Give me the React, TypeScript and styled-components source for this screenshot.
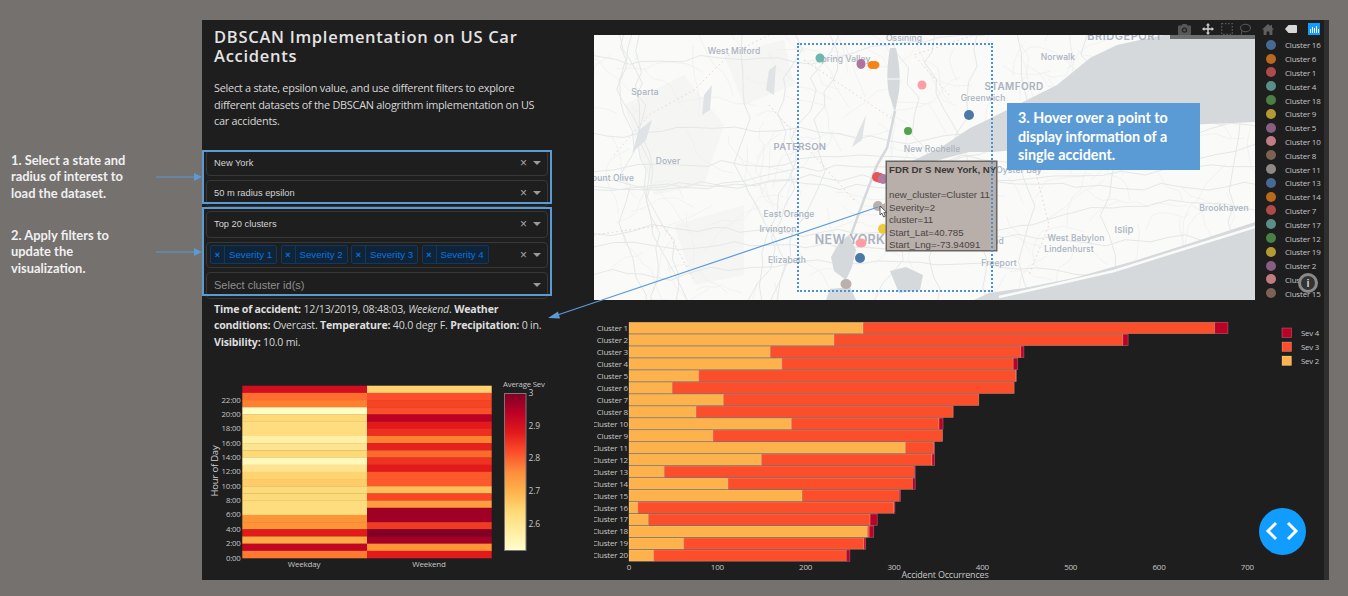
import React from 'react';
import styled, { createGlobalStyle } from 'styled-components';

const Global = createGlobalStyle`
  html, body { margin: 0; padding: 0; background: #75716f; }
  * { box-sizing: border-box; }
`;

const BLUE = '#5b9bd5';
const OPEN = '"Open Sans", "Noto Sans", sans-serif';
const ARIAL = '"Liberation Sans", Arial, sans-serif';

const Page = styled.div`
  position: relative;
  width: 1348px;
  height: 596px;
  overflow: hidden;
  display: flex;
  padding: 20px 0 0 11px;
  background: #75716f;
`;

const Notes = styled.div`
  width: 191px;
  padding-top: 132px;
  display: flex;
  flex-direction: column;
  gap: 26px;
`;
const NoteRow = styled.div`
  display: flex;
  align-items: center;
  justify-content: space-between;
  height: 49px;
`;
const NoteText = styled.div`
  width: 125px;
  font: 700 12.9px/16.5px Lato, sans-serif;
  color: #f0f0f0;
`;

const Panel = styled.div`
  width: 1127px;
  height: 560px;
  display: flex;
  background: #1e1e1e;
`;
const LeftCol = styled.div`
  width: 392px;
  flex: none;
  display: flex;
  flex-direction: column;
  padding-top: 7px;
`;
const Title = styled.h1`
  margin: 0 0 0 12px;
  width: 330px;
  font: 600 16.5px/19px ${OPEN};
  letter-spacing: 0.72px;
  color: #e4e4e4;
`;
const Intro = styled.p`
  margin: 15px 0 20px 12px;
  width: 325px;
  font: 400 10.9px/16.5px ${OPEN};
  letter-spacing: -0.26px;
  color: #d8d8d8;
`;
const Group = styled.div<{ $top: number; $bottom: number }>`
  position: relative;
  margin: 0 0 0 4px;
  width: 342px;
  display: flex;
  flex-direction: column;
  gap: 4px;
  &::after {
    content: '';
    position: absolute;
    left: -4px;
    right: -4px;
    top: ${p => p.$top}px;
    bottom: ${p => p.$bottom}px;
    border: 2px solid ${BLUE};
    pointer-events: none;
  }
  & + & { margin-top: 4.5px; }
`;
const Drop = styled.div`
  height: 26.5px;
  display: flex;
  align-items: center;
  padding: 0 6px 0 7px;
  border: 1px solid #383838;
  border-radius: 4px;
  background: #1e1e1e;
`;
const DropValue = styled.div`
  flex: 1;
  font: 400 9.3px ${ARIAL};
  color: #d4d4d4;
`;
const DropPlaceholder = styled.div`
  flex: 1;
  font: 400 11px ${ARIAL};
  color: #8f8f8f;
`;
const Clear = styled.span`
  font: 400 12px ${ARIAL};
  color: #a8a8a8;
  margin-right: 6px;
`;
const Caret = styled.span`
  width: 0;
  height: 0;
  border-left: 4px solid transparent;
  border-right: 4px solid transparent;
  border-top: 4px solid #9a9a9a;
`;
const Tags = styled.div`
  flex: 1;
  margin-left: -4px;
  display: flex;
  gap: 3.5px;
`;
const Tag = styled.div`
  width: 67px;
  height: 19px;
  display: flex;
  align-items: stretch;
  background: #0f2438;
  border: 1px solid #12395c;
  border-radius: 2px;
  color: #0a74e0;
`;
const TagX = styled.span`
  width: 14px;
  border-right: 1px solid #12395c;
  display: flex;
  align-items: center;
  justify-content: center;
  font: 700 9px ${ARIAL};
`;
const TagLabel = styled.span`
  flex: 1;
  padding-left: 4px;
  font: 400 9.7px/17px ${ARIAL};
  white-space: nowrap;
`;
const Details = styled.p`
  margin: 2.5px 0 0 12px;
  width: 330px;
  font: 400 10.6px/16.3px ${OPEN};
  letter-spacing: -0.2px;
  color: #d6d6d6;
  b { font-weight: 700; color: #dedede; }
`;
const HeatSvg = styled.svg`
  display: block;
  margin-top: 28.5px;
  flex: none;
`;
const AxisText = styled.text<{ $size?: number; $fill?: string }>`
  font-family: ${OPEN};
  font-size: ${p => p.$size ?? 8}px;
  letter-spacing: -0.2px;
  fill: ${p => p.$fill ?? '#c6c6c6'};
`;

const RightCol = styled.div`
  position: relative;
  width: 730px;
  flex: none;
  padding-top: 15px;
`;
const MapRow = styled.div`
  display: flex;
  height: 265px;
`;
const MapBox = styled.div`
  position: relative;
  width: 661px;
  height: 265px;
  flex: none;
  overflow: hidden;
  background: #fafaf9;
`;
const MapSvg = styled.svg`
  display: block;
`;
const MapLabel = styled.text<{ $size?: number; $weight?: number; $ls?: number }>`
  font-family: Inter, ${OPEN};
  font-size: ${p => p.$size ?? 8.5}px;
  font-weight: ${p => p.$weight ?? 500};
  letter-spacing: ${p => p.$ls ?? 0.1}px;
  fill: #a9b2be;
  text-anchor: middle;
`;
const Selection = styled.div`
  position: absolute;
  left: 203px;
  top: 8px;
  width: 196px;
  height: 249px;
  border: 2px dotted #4a92d8;
  z-index: 3;
`;
const Callout = styled.div`
  position: absolute;
  left: 413px;
  top: 68px;
  width: 193px;
  height: 67px;
  padding: 6px 20px 0 11px;
  background: ${BLUE};
  font: 700 14.3px/18.5px Lato, sans-serif;
  color: #fff;
  z-index: 4;
`;
const HoverBox = styled.div`
  position: absolute;
  left: 292px;
  top: 126px;
  width: 111px;
  height: 90px;
  padding: 2px 0 0 2px;
  background: #b8aeaa;
  border: 1px solid #6a6664;
  box-shadow: 0 0 0 0.5px #6a6664;
  font: 400 9.7px/12.5px ${ARIAL};
  color: #4a4644;
  white-space: nowrap;
  z-index: 2;
  b { font-weight: 700; color: #3c3836; }
  &::before {
    content: '';
    position: absolute;
    left: -7px;
    top: 40px;
    border-top: 5px solid transparent;
    border-bottom: 5px solid transparent;
    border-right: 6px solid #b8aeaa;
  }
`;
const HoverLine = styled.div<{ $gap?: boolean }>`
  margin-top: ${p => (p.$gap ? 12.5 : 0)}px;
`;
const Cursor = styled.svg`
  position: absolute;
  left: 285px;
  top: 170px;
  z-index: 3;
`;
const SpikeBand = styled.div`
  position: absolute;
  right: 0;
  top: 0;
  width: 85px;
  height: 4px;
  background: #6c7070;
  z-index: 2;
`;
const Legend = styled.div`
  flex: 1;
  padding: 3px 0 0 10.5px;
  display: flex;
  flex-direction: column;
`;
const LegendItem = styled.div`
  height: 13.94px;
  display: flex;
  align-items: center;
  gap: 9.5px;
  font: 400 8px ${OPEN};
  letter-spacing: -0.2px;
  color: #c4c4c4;
  white-space: nowrap;
`;
const Dot = styled.span<{ $c: string }>`
  width: 10px;
  height: 10px;
  border-radius: 50%;
  background: ${p => p.$c};
  flex: none;
`;
const BarSvg = styled.svg`
  display: block;
  margin-top: 18px;
`;
const Modebar = styled.div`
  position: absolute;
  left: 583.5px;
  top: 2.5px;
  height: 13px;
  display: flex;
  align-items: center;
  z-index: 5;
`;
const ModeIcon = styled.svg<{ $gap: number }>`
  flex: none;
  margin-right: ${p => p.$gap}px;
`;
const InfoRing = styled.div`
  position: absolute;
  left: 704px;
  top: 253px;
  width: 20px;
  height: 20px;
  border-radius: 50%;
  border: 3px solid #8a8a8a;
  background: #333;
  display: flex;
  align-items: center;
  justify-content: center;
  font: 700 11px ${ARIAL};
  color: #cfcfcf;
  z-index: 6;
`;
const Fab = styled.div`
  position: absolute;
  left: 664.5px;
  top: 487.5px;
  width: 47px;
  height: 47px;
  border-radius: 50%;
  background: #119dff;
  display: flex;
  align-items: center;
  justify-content: center;
`;
const Track = styled.div`
  flex: 1;
  background: #2f2f2f;
`;
const Overlay = styled.svg`
  position: absolute;
  left: 0;
  top: 0;
  z-index: 10;
  pointer-events: none;
`;

const weekday = ['#d01020','#fd6d2e','#fe7f30','#fffcc4','#fed976','#fedc80','#fedc80','#fff0a8','#fee48e','#fed976','#fff8bb','#fee48e','#fed471','#fecc68','#fedb7a','#fedb7a','#fedd7f','#fedd7f','#fd9538','#fd9538','#e31a1c','#feaa45','#c10623','#fd7a30'];
const weekend = ['#fed370','#fc4e2a','#f64424','#fc4e2a','#bd0026','#e31a1c','#ec2f20','#fd8230','#e62220','#fd6a2c','#ee3322','#e31a1c','#fc5a2b','#fc5a2b','#febf5a','#fb4526','#fe9e3e','#a00026','#a00026','#f03a23','#800026','#a50026','#fe9435','#e31a1c'];

const bars: [string, number, number, number][] = [
  ['Cluster 1',265,663,678],['Cluster 2',232,559,565],['Cluster 3',160,443.5,447],['Cluster 4',173,435,440],
  ['Cluster 5',79,438,438.5],['Cluster 6',49,436,436],['Cluster 7',107,396,396],['Cluster 8',76,367,367],
  ['Cluster 10',184,351,355.5],['Cluster 9',95,355,355],['Cluster 11',313,345,346],['Cluster 12',150,343,346],
  ['Cluster 13',40,323,324],['Cluster 14',112,321,324],['Cluster 15',196,306,307.5],['Cluster 16',10,300,301],
  ['Cluster 17',22,273,281],['Cluster 18',270,272,277],['Cluster 19',62,266,268],['Cluster 20',28,246,250],
];

const legendItems: [string, string][] = [
  ['Cluster 16','#466a92'],['Cluster 6','#b9691c'],['Cluster 1','#ae4a4a'],['Cluster 4','#5a8f89'],['Cluster 18','#4b8045'],
  ['Cluster 9','#b39a33'],['Cluster 5','#875f80'],['Cluster 10','#c17b82'],['Cluster 8','#7d6152'],['Cluster 11','#8f8884'],
  ['Cluster 13','#466a92'],['Cluster 14','#b9691c'],['Cluster 7','#ae4a4a'],['Cluster 17','#5a8f89'],['Cluster 12','#4b8045'],
  ['Cluster 19','#b39a33'],['Cluster 2','#875f80'],['Cluster 3','#c17b82'],['Cluster 15','#7d6152'],
];

const points: [number, number, number, number, string][] = [
  [226,23,4.5,4.5,'#6fb7ae'],[267,29,4.5,5,'#b0739f'],[278,30,4.5,4,'#f58518'],[281,30,4.5,4,'#f58518'],
  [328,50,4.5,4.5,'#ff9da6'],[375,80,5,5,'#4c78a8'],[314,96,4,4,'#54a24b'],[283,142,5,5,'#e45756'],
  [286,143,5,5,'#e45756'],[289,144,5,5,'#b279a2'],[284,171,5,5,'#bab0ac'],[289,194,5,5,'#eeca3b'],
  [267,208,5.5,4.5,'#ff9da6'],[266,223,5,5,'#4c78a8'],[252,249,5.5,5,'#bab0ac'],
];

const labels: [string, number, number, number?, number?, number?][] = [
  ['West Milford',140,19],['Ossining',310,6],['pring Valley',252,27],['Sparta',51,60],['PATERSON',206,115,9.5,600,0.3],
  ['Dover',74,129],['ount Olive',19,146],['East Orange',195,182],['Irvington',184,197],['NEW YORK',256,209,12.5,600,0.3],
  ['Elizabeth',193,228],['New Rochelle',338,117],['BRIDGEPORT',531,5,11,600,0.5],['Norwalk',464,25],['STAMFORD',420,55,10,600,0.4],
  ['Greenwich',389,66],['Oyster Bay',425,138],['Brookhaven',630,176],['Islip',530,198,9.5],['West Babylon',482,206],
  ['Lindenhurst',475,217],['Freeport',405,231],['Hempstead',386,209],
];

function seeded(seed: number) {
  let s = seed;
  return () => {
    s = (s * 16807) % 2147483647;
    return (s - 1) / 2147483646;
  };
}

function buildRoads(): { minor: string[]; major: string[] } {
  const r = seeded(4711);
  const minor: string[] = [];
  for (let i = 0; i < 150; i++) {
    let x = r() * 661;
    let y = r() * 265;
    let a = r() * Math.PI * 2;
    let d = `M${x.toFixed(1)} ${y.toFixed(1)}`;
    const n = 3 + Math.floor(r() * 6);
    for (let k = 0; k < n; k++) {
      a += (r() - 0.5) * 1.2;
      x += Math.cos(a) * (6 + r() * 12);
      y += Math.sin(a) * (6 + r() * 12);
      d += `L${x.toFixed(1)} ${y.toFixed(1)}`;
    }
    minor.push(d);
  }
  const major: string[] = [];
  for (let i = 0; i < 14; i++) {
    let x = 20 + r() * 620;
    let y = 0;
    const sway = (r() - 0.5) * 8;
    let d = `M${x.toFixed(1)} ${y}`;
    while (y < 265) {
      x += sway + (r() - 0.5) * 20;
      y += 10 + r() * 12;
      d += `L${x.toFixed(1)} ${y.toFixed(1)}`;
    }
    major.push(d);
  }
  for (let i = 0; i < 9; i++) {
    let x = 0;
    let y = 20 + r() * 225;
    let d = `M0 ${y.toFixed(1)}`;
    while (x < 661) {
      x += 12 + r() * 14;
      y += (r() - 0.55) * 12;
      d += `L${x.toFixed(1)} ${y.toFixed(1)}`;
    }
    major.push(d);
  }
  return { minor, major };
}
const roads = buildRoads();

const chartX = (v: number) => 35 + v * 0.8834;

function MapArt() {
  return (
    <MapSvg width={661} height={265} viewBox="0 0 661 265">
      <g fill="#f5f6f4">
        <path d="M30 70 L90 40 L130 90 L110 150 L60 160 Z" />
        <path d="M130 20 L190 5 L200 50 L150 70 Z" />
        <path d="M80 190 L150 170 L150 240 L100 250 Z" />
      </g>
      <g fill="none" stroke="#eceeee" strokeWidth="0.7">
        {roads.minor.map((d, i) => <path key={i} d={d} />)}
      </g>
      <g fill="none" stroke="#e5e8e8" strokeWidth="1">
        {roads.major.map((d, i) => <path key={i} d={d} />)}
      </g>
      <g fill="none" stroke="#edd0d4" strokeWidth="1" strokeDasharray="1.5 3">
        <path d="M20 120 L55 80 L100 55 L135 20 L175 0" />
        <path d="M175 70 L215 115 L260 165" />
        <path d="M210 25 L300 85" />
        <path d="M0 200 L70 190 L100 245" />
        <path d="M355 60 L320 20 L380 0" />
        <path d="M440 130 L455 190 L435 240" />
      </g>
      <g fill="#d5d9dc">
        <path d="M569 0 L523 10 L496 23 L463 50 L423 70 L389 87 L376 93 L346 113 L316 127 L308 139 L345 125 L375 117 L399 117 L443 113 L485 106 L523 97 L589 90 L661 87 L661 0 Z" />
        <path d="M661 187 L600 207 L540 226 L480 243 L430 253 L395 258 L380 265 L661 265 Z" />
        <path d="M296 13 C293 30 292 50 296 62 L301 77 L304 62 C307 50 306 30 302 13 Z" />
        <path d="M255 200 L262 215 L258 232 L252 245 L240 236 L237 222 L245 208 Z" />
        <path d="M296 236 L312 232 L329 240 L326 255 L305 258 Z" />
        <path d="M236 254 L256 252 L262 265 L232 265 Z" />
      </g>
      <path d="M301 76 L293 113 L283 130 L269 167 L257 200" fill="none" stroke="#d5d9dc" strokeWidth="2.5" />
      <g fill="#dfe3e5">
        <path d="M45 95 L58 85 L52 105 L38 118 Z" />
        <path d="M110 60 L118 50 L116 75 L108 80 Z" />
        <path d="M175 35 L182 30 L180 60 L172 55 Z" />
        <path d="M265 95 L272 80 L268 105 L258 112 Z" />
      </g>
      <path d="M661 192 L590 214 L520 236 L450 252 L405 262" fill="none" stroke="#fafaf9" strokeWidth="2.5" />
      <path d="M293 44 L306 44" stroke="#eceeef" strokeWidth="1.5" />
      {labels.map(([t, x, y, size, weight, ls]) => (
        <MapLabel key={t} x={x} y={y} $size={size} $weight={weight} $ls={ls}>{t}</MapLabel>
      ))}
      {points.map(([x, y, rx, ry, c], i) => (
        <ellipse key={i} cx={x} cy={y} rx={rx} ry={ry} fill={c} />
      ))}
    </MapSvg>
  );
}

function Heatmap() {
  const rowH = 172.3 / 24;
  const ticks = ['22:00','20:00','18:00','16:00','14:00','12:00','10:00','8:00','6:00','4:00','2:00','0:00'];
  const cb = [['3',15],['2.9',48],['2.8',80],['2.7',113],['2.6',146]] as const;
  return (
    <HeatSvg width={392} height={200} viewBox="0 0 392 200">
      <defs>
        <linearGradient id="ylorrd" x1="0" y1="1" x2="0" y2="0">
          {['#ffffcc','#ffeda0','#fed976','#feb24c','#fd8d3c','#fc4e2a','#e31a1c','#bd0026','#800026'].map((c, i) => (
            <stop key={c} offset={i / 8} stopColor={c} />
          ))}
        </linearGradient>
      </defs>
      {weekday.map((c, i) => <rect key={i} x={40.3} y={7.7 + i * rowH} width={124.7} height={rowH + 0.3} fill={c} />)}
      {weekend.map((c, i) => <rect key={i} x={165} y={7.7 + i * rowH} width={124.7} height={rowH + 0.3} fill={c} />)}
      {ticks.map((t, i) => (
        <AxisText key={t} x={38.5} y={21.5 + i * 14.37 + 3} textAnchor="end" $size={7.8}>{t}</AxisText>
      ))}
      <AxisText x={102} y={189} textAnchor="middle">Weekday</AxisText>
      <AxisText x={227} y={189} textAnchor="middle">Weekend</AxisText>
      <AxisText x={16} y={93} textAnchor="middle" $size={9.5} $fill="#d0d0d0" transform="rotate(-90 16 93)">Hour of Day</AxisText>
      <AxisText x={301} y={9} $size={7.8}>Average Sev</AxisText>
      <rect x={302.5} y={15.5} width={21.5} height={157} fill="url(#ylorrd)" stroke="#777" strokeWidth="1" />
      {cb.map(([t, y]) => <AxisText key={t} x={326.5} y={y + 3} $size={8.5}>{t}</AxisText>)}
    </HeatSvg>
  );
}

function BarChart() {
  const step = 11.98;
  return (
    <BarSvg width={730} height={262} viewBox="0 0 730 262">
      {bars.map(([name, a, b, c], i) => {
        const y = 4.3 + i * step;
        const h = 11.3;
        return (
          <g key={name}>
            <AxisText x={34} y={y + 8.5} textAnchor="end" $size={8}>{name}</AxisText>
            <g stroke="rgba(255,255,255,0.3)" strokeWidth="0.7">
              <rect x={chartX(0)} y={y} width={chartX(a) - chartX(0)} height={h} fill="#feb24c" />
              <rect x={chartX(a)} y={y} width={chartX(b) - chartX(a)} height={h} fill="#fc4e2a" />
              {c > b && <rect x={chartX(b)} y={y} width={chartX(c) - chartX(b)} height={h} fill="#bd0026" />}
            </g>
          </g>
        );
      })}
      {[0,100,200,300,400,500,600,700].map(v => (
        <AxisText key={v} x={chartX(v)} y={252} textAnchor="middle" $size={8}>{v}</AxisText>
      ))}
      <AxisText x={351} y={260} textAnchor="middle" $size={9}>Accident Occurrences</AxisText>
      {([['Sev 4','#bd0026',10],['Sev 3','#fc4e2a',24],['Sev 2','#feb24c',38]] as const).map(([t, c, y]) => (
        <g key={t}>
          <rect x={688} y={y} width={9.5} height={9.5} fill={c} stroke="rgba(255,255,255,0.3)" strokeWidth="0.7" />
          <AxisText x={707} y={y + 8} $size={7.8}>{t}</AxisText>
        </g>
      ))}
    </BarSvg>
  );
}

function ModebarIcons() {
  return (
    <Modebar>
      <ModeIcon $gap={11} width={13} height={12} viewBox="0 0 13 12" fill="#565656">
        <path d="M1 2.5h2.5L4.5 1h4l1 1.5H12a1 1 0 0 1 1 1V11a1 1 0 0 1-1 1H1a1 1 0 0 1-1-1V3.5a1 1 0 0 1 1-1Z" />
        <circle cx="6.5" cy="7" r="2.6" fill="#1e1e1e" />
        <circle cx="6.5" cy="7" r="1.5" />
      </ModeIcon>
      <ModeIcon $gap={7} width={12} height={12} viewBox="0 0 12 12" fill="#d4d4d4">
        <path d="M6 0l2 2.4H6.7v2.9h2.9V4L12 6 9.6 8V6.7H6.7v2.9H8L6 12 4 9.6h1.3V6.7H2.4V8L0 6l2.4-2v1.3h2.9V2.4H4z" />
      </ModeIcon>
      <ModeIcon $gap={6} width={12} height={12} viewBox="0 0 12 12" fill="none" stroke="#565656" strokeWidth="1.3" strokeDasharray="1.6 1.6">
        <rect x="0.7" y="0.7" width="10.6" height="10.6" />
      </ModeIcon>
      <ModeIcon $gap={11} width={12} height={12} viewBox="0 0 12 12" fill="none" stroke="#565656" strokeWidth="1.1">
        <ellipse cx="6.5" cy="5" rx="5" ry="3.8" />
        <path d="M3 8.2 C2 9.5 3 10.5 2 11.5" />
      </ModeIcon>
      <ModeIcon $gap={11} width={12} height={11} viewBox="0 0 12 11" fill="#5e5e5e">
        <path d="M6 0L0 5.5h1.6V11h3V7.5h2.8V11h3V5.5H12L10 3.6V1H8.6v1.3z" />
      </ModeIcon>
      <ModeIcon $gap={11} width={12} height={8} viewBox="0 0 12 8" fill="#d8d8d8">
        <path d="M3.5 0H11a1 1 0 0 1 1 1v6a1 1 0 0 1-1 1H3.5L0 4z" />
      </ModeIcon>
      <ModeIcon $gap={0} width={12} height={12} viewBox="0 0 12 12">
        <rect width="12" height="12" fill="#119dff" />
        <g fill="#fff">
          <rect x="2" y="6" width="1" height="4" /><rect x="4" y="4" width="1" height="6" />
          <rect x="6" y="5" width="1" height="5" /><rect x="8" y="3" width="1" height="7" />
          <rect x="10" y="6" width="1" height="4" />
        </g>
      </ModeIcon>
    </Modebar>
  );
}

function Arrow() {
  return (
    <svg width={46} height={10} viewBox="0 0 46 10">
      <path d="M0 5H38" stroke={BLUE} strokeWidth="1" />
      <path d="M38 1L46 5L38 9Z" fill={BLUE} />
    </svg>
  );
}

function Dropdown({ value }: { value: string }) {
  return (
    <Drop>
      <DropValue>{value}</DropValue>
      <Clear>×</Clear>
      <Caret />
    </Drop>
  );
}

export default function App() {
  return (
    <Page>
      <Global />
      <Notes>
        <NoteRow>
          <NoteText>1. Select a state and radius of interest to load the dataset.</NoteText>
          <Arrow />
        </NoteRow>
        <NoteRow>
          <NoteText>2. Apply filters to update the visualization.</NoteText>
          <Arrow />
        </NoteRow>
      </Notes>
      <Panel>
        <LeftCol>
          <Title>DBSCAN Implementation on US Car Accidents</Title>
          <Intro>Select a state, epsilon value, and use different filters to explore different datasets of the DBSCAN alogrithm implementation on US car accidents.</Intro>
          <Group $top={0} $bottom={2.5}>
            <Dropdown value="New York" />
            <Dropdown value="50 m radius epsilon" />
          </Group>
          <Group $top={-4} $bottom={3}>
            <Dropdown value="Top 20 clusters" />
            <Drop>
              <Tags>
                {[1, 2, 3, 4].map(n => (
                  <Tag key={n}>
                    <TagX>×</TagX>
                    <TagLabel>Severity {n}</TagLabel>
                  </Tag>
                ))}
              </Tags>
              <Clear>×</Clear>
              <Caret />
            </Drop>
            <Drop>
              <DropPlaceholder>Select cluster id(s)</DropPlaceholder>
              <Caret />
            </Drop>
          </Group>
          <Details>
            <b>Time of accident:</b> 12/13/2019, 08:48:03, <i>Weekend</i>. <b>Weather conditions:</b> Overcast. <b>Temperature:</b> 40.0 degr F. <b>Precipitation:</b> 0 in. <b>Visibility:</b> 10.0 mi.
          </Details>
          <Heatmap />
        </LeftCol>
        <RightCol>
          <ModebarIcons />
          <MapRow>
            <MapBox>
              <MapArt />
              <SpikeBand />
              <HoverBox>
                <div><b>FDR Dr S New York, NY</b></div>
                <HoverLine $gap>new_cluster=Cluster 11</HoverLine>
                <HoverLine>Severity=2</HoverLine>
                <HoverLine>cluster=11</HoverLine>
                <HoverLine>Start_Lat=40.785</HoverLine>
                <HoverLine>Start_Lng=-73.94091</HoverLine>
              </HoverBox>
              <Selection />
              <Cursor width={9} height={13} viewBox="0 0 9 13">
                <path d="M1 1V10L3 8.2L4.6 12L6.4 11.2L4.8 7.6H7.8Z" fill="#fff" stroke="#333" strokeWidth="0.8" />
              </Cursor>
              <Callout>3. Hover over a point to display information of a single accident.</Callout>
            </MapBox>
            <Legend>
              {legendItems.map(([t, c]) => (
                <LegendItem key={t}><Dot $c={c} />{t}</LegendItem>
              ))}
            </Legend>
          </MapRow>
          <BarChart />
          <InfoRing>i</InfoRing>
          <Fab>
            <svg width={34} height={22} viewBox="0 0 34 22" fill="none" stroke="#fff" strokeWidth="3">
              <path d="M11 3L3 11L11 19" />
              <path d="M23 3L31 11L23 19" />
            </svg>
          </Fab>
        </RightCol>
        <Track />
      </Panel>
      <Overlay width={1348} height={596} viewBox="0 0 1348 596">
        <path d="M878 207L556 315.5" stroke={BLUE} strokeWidth="1.2" />
        <path d="M548 318L558 311.5L560 318.5Z" fill={BLUE} />
      </Overlay>
    </Page>
  );
}
